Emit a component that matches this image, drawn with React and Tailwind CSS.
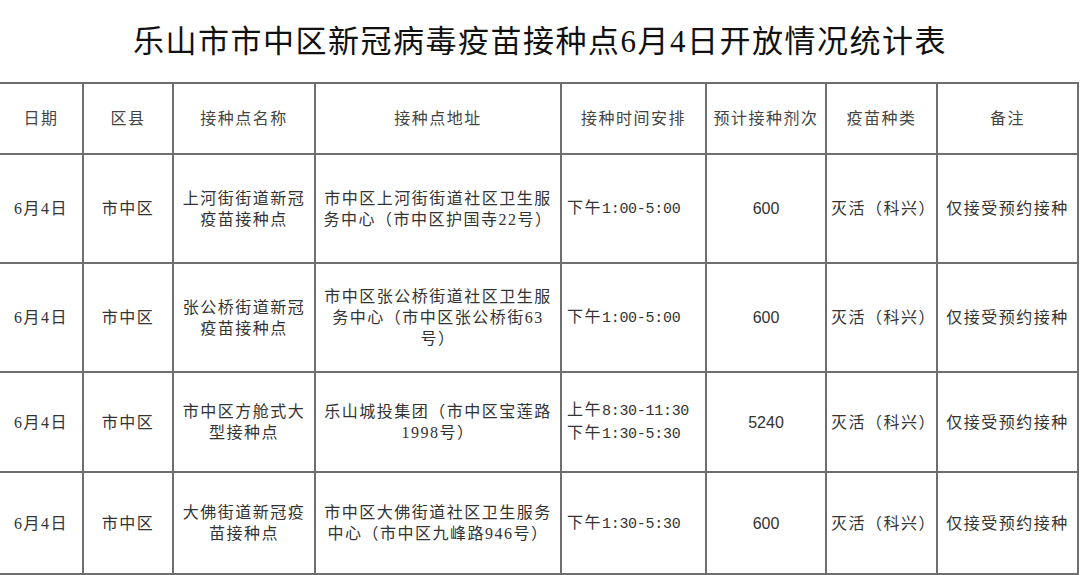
const cjk = "font-['Liberation_Serif','Noto_Sans_CJK_SC',serif]";

const rows = [
  {
    name: ["上河街街道新冠", "疫苗接种点"],
    addr: ["市中区上河街街道社区卫生服", "务中心（市中区护国寺22号）"],
    time: ["下午|1:00-5:00"],
    doses: "600",
    h: "h-[109px]",
  },
  {
    name: ["张公桥街道新冠", "疫苗接种点"],
    addr: ["市中区张公桥街道社区卫生服", "务中心（市中区张公桥街63", "号）"],
    time: ["下午|1:00-5:00"],
    doses: "600",
    h: "h-[109px]",
  },
  {
    name: ["市中区方舱式大", "型接种点"],
    addr: ["乐山城投集团（市中区宝莲路", "1998号）"],
    time: ["上午|8:30-11:30", "下午|1:30-5:30"],
    doses: "5240",
    h: "h-[100px]",
  },
  {
    name: ["大佛街道新冠疫", "苗接种点"],
    addr: ["市中区大佛街道社区卫生服务", "中心（市中区九峰路946号）"],
    time: ["下午|1:30-5:30"],
    doses: "600",
    h: "h-[102px]",
  },
];

const headers = [
  "日期",
  "区县",
  "接种点名称",
  "接种点地址",
  "接种时间安排",
  "预计接种剂次",
  "疫苗种类",
  "备注",
];

function Lines({ items }) {
  return items.map((t, i) => (
    <div key={i} className="whitespace-nowrap">
      {t}
    </div>
  ));
}

function Time({ items }) {
  return items.map((t, i) => {
    const [pre, nums] = t.split("|");
    return (
      <div key={i} className="whitespace-nowrap">
        {pre}
        <span className="font-['Liberation_Mono',monospace] text-[15px] tracking-[-0.3px]">
          {nums}
        </span>
      </div>
    );
  });
}

export default function App() {
  const cell = "border-2 border-[#6e6e6e] align-middle";
  return (
    <div className={`w-[1080px] h-[575px] overflow-hidden bg-white ${cjk}`}>
      <div className="h-[82px] flex items-center justify-center">
        <h1 className="text-[31px] tracking-[1.5px] font-normal text-[#111] leading-none">
          乐山市市中区新冠病毒疫苗接种点6月4日开放情况统计表
        </h1>
      </div>

      <table className="w-[1078px] table-fixed border-collapse text-[16px] tracking-[1.5px] text-[#333] leading-[21px]">
        <colgroup>
          <col className="w-[83px]" />
          <col className="w-[90px]" />
          <col className="w-[142px]" />
          <col className="w-[246px]" />
          <col className="w-[145px]" />
          <col className="w-[120px]" />
          <col className="w-[111px]" />
          <col className="w-[141px]" />
        </colgroup>
        <thead>
          <tr className="h-[71px]">
            {headers.map((h, i) => (
              <th
                key={h}
                className={`${cell} font-normal text-center whitespace-nowrap text-[#444] ${
                  i === 0 ? "border-l-0" : ""
                }`}
              >
                {h}
              </th>
            ))}
          </tr>
        </thead>
        <tbody>
          {rows.map((r, i) => (
            <tr key={i} className={r.h}>
              <td className={`${cell} border-l-0 text-center`}>6月4日</td>
              <td className={`${cell} text-center`}>市中区</td>
              <td className={`${cell} text-center`}>
                <Lines items={r.name} />
              </td>
              <td className={`${cell} text-center`}>
                <Lines items={r.addr} />
              </td>
              <td className={`${cell} text-left pl-[5px]`}>
                <Time items={r.time} />
              </td>
              <td
                className={`${cell} text-center font-['Liberation_Sans',sans-serif] tracking-normal`}
              >
                {r.doses}
              </td>
              <td className={`${cell} text-left pl-[4px] whitespace-nowrap`}>
                灭活（科兴）
              </td>
              <td className={`${cell} text-center whitespace-nowrap`}>
                仅接受预约接种
              </td>
            </tr>
          ))}
        </tbody>
      </table>
    </div>
  );
}
